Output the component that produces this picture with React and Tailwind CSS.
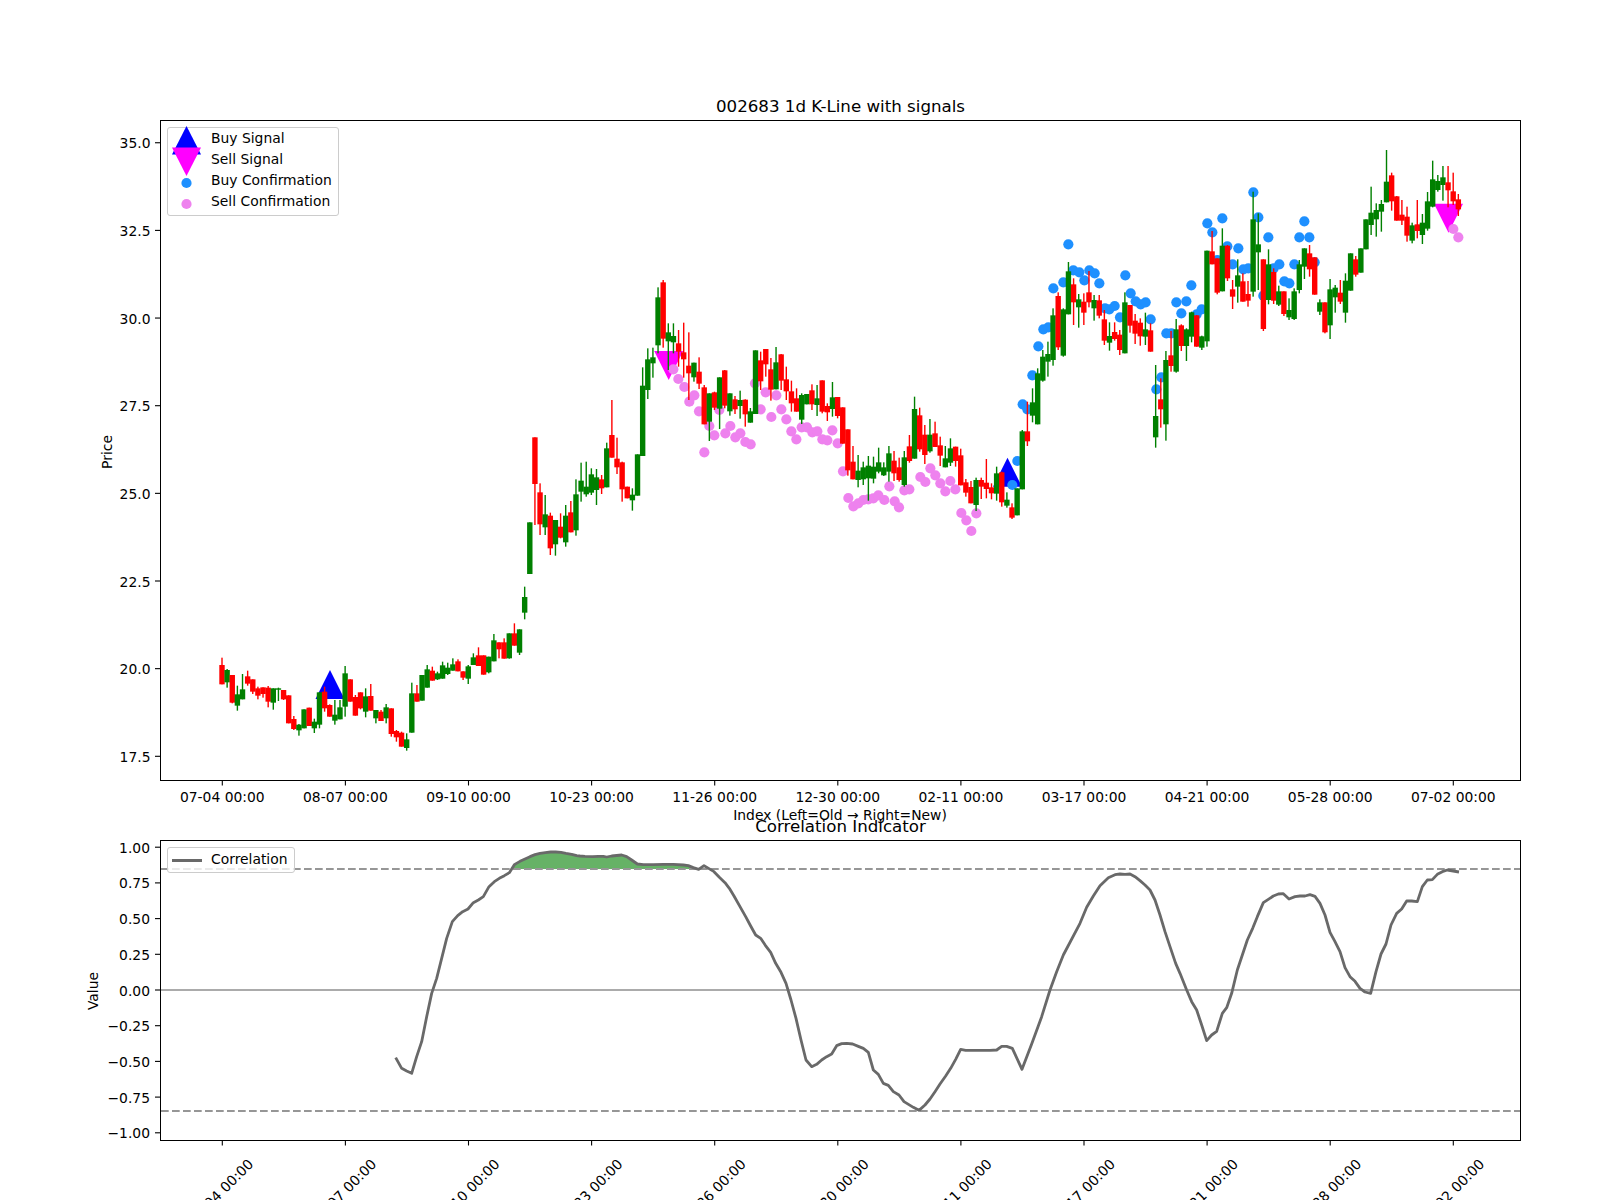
import React from "react";

/* Candle rows are [colour, wickTop, bodyTop, bodyBottom, wickBottom], read off
   3x crops of the chart, so every y is y / 3 + yOff in page pixels. */
const CANDLE_SEGMENTS = [
  {
    yOff: 620,
    rows: [
      ["r",113,135,193,193],["g",147,150,187,203],["r",165,165,248,250],["g",197,223,257,272],["g",162,208,238,238],
      ["r",152,169,191,197],["r",178,178,215,222],["r",200,205,227,238],["r",202,202,222,233],["r",198,203,245,262],
      ["g",205,205,248,269],["g",203,205,208,243],["r",210,210,238,240],["r",226,226,310,310],["r",288,297,327,330],
      ["g",312,314,331,347],["g",268,268,325,325],["r",263,263,318,318],["g",296,305,325,339],["g",217,217,314,325],
      ["r",200,215,265,275],["r",253,255,290,290],["g",240,284,302,314],["g",240,262,298,298],["g",138,160,260,290],
      ["r",178,178,245,245],["r",225,231,287,287],["r",217,217,265,268],["g",205,229,275,292],["r",192,228,272,272],
      ["g",270,270,295,310],["r",270,275,303,303],["g",252,262,295,310],["r",265,265,342,350],["r",330,333,352,365],
      ["r",335,338,380,380],["g",340,358,384,392],["g",188,220,338,338],["r",195,220,245,245],["g",165,165,242,242],
      ["g",135,148,203,203],["r",140,152,182,182],["g",155,160,178,180],["g",125,136,176,176],["g",128,143,162,165],
      ["g",115,133,152,152],["r",118,124,154,154],["r",154,154,173,180],["g",135,139,176,192],["g",100,112,135,135],
      ["r",82,106,138,138],["r",106,106,164,164],["g",110,110,157,160],["g",42,61,124,124],["r",67,67,88,115],
      ["r",55,67,116,116],["g",40,40,115,116],["r",10,40,77,77],["g",28,28,98,105],["g",-100,-69,-22,-2],
    ],
  },
  {
    yOff: 270,
    rows: [
      ["g",757,757,912,912],["r",502,502,642,765],["r",640,667,763,795],["g",675,733,772,795],["r",728,737,835,855],
      ["g",750,750,823,857],["r",730,770,803,805],["g",705,737,817,830],["r",693,727,787,787],["g",628,673,781,797],
      ["g",578,632,665,695],["g",575,650,673,680],["g",595,613,668,675],["g",597,622,660,705],["r",615,628,655,672],
      ["g",518,535,652,652],["r",390,495,563,563],["r",503,566,592,612],["r",575,577,658,695],["r",650,650,685,685],
      ["g",655,674,691,722],["g",553,553,677,677],["g",292,347,558,558],["g",235,268,360,387],["g",233,262,280,323],
      ["g",52,82,226,250],["r",30,37,206,233],["g",160,187,214,300],["g",160,198,217,250],["r",180,220,245,290],
      ["r",158,247,268,323],["r",187,287,310,390],["g",278,278,322,335],["r",262,305,341,357],["r",345,352,463,463],
      ["g",370,370,455,513],["r",365,367,413,420],["g",322,322,416,477],["r",300,301,407,415],["g",370,370,424,437],
      ["r",378,388,418,432],["g",362,390,408,446],["r",388,389,433,470],["g",414,424,458,458],["g",241,241,432,432],
      ["r",245,271,334,360],["r",237,237,283,320],["r",264,298,359,392],["g",231,277,358,358],["r",252,253,332,360],
      ["r",290,328,364,390],["r",332,364,400,425],["r",355,385,425,425],["g",370,375,449,462],["g",372,372,403,403],
      ["r",343,361,403,420],["g",345,385,405,438],["r",331,331,425,430],["r",400,408,427,453],["g",336,382,417,440],
      ["r",381,381,438,445],["r",412,412,521,521],["r",478,478,601,617],
    ],
  },
  {
    yOff: 350,
    rows: [
      ["r",288,335,388,388],["g",315,362,390,412],["g",335,352,388,405],["g",318,347,385,452],["g",320,350,386,400],
      ["g",293,337,365,370],["g",337,352,376,378],["g",288,310,365,395],["r",303,332,370,393],["r",323,352,390,395],
      ["g",303,322,405,410],["r",255,289,333,338],["g",140,177,326,326],["r",173,196,298,305],["r",225,254,315,342],
      ["g",207,254,304,308],["r",215,250,291,291],["r",260,286,317,348],["g",288,325,352,352],["g",265,295,338,348],
      ["r",290,290,333,350],["r",296,316,406,406],["r",387,397,428,440],["r",393,411,460,460],["g",383,390,465,483],
      ["r",383,390,410,447],["r",327,398,417,445],["r",400,412,430,448],["g",350,370,431,452],["r",365,367,457,470],
      ["g",427,449,467,473],["r",460,472,503,507],["g",415,415,496,496],["g",240,244,418,418],["r",155,244,274,288],
    ],
  },
  {
    yOff: 130,
    rows: [
      ["g",775,817,857,877],["g",715,730,883,883],["g",660,680,752,755],["g",635,672,695,740],["g",535,556,690,707],
      ["r",487,498,652,660],["g",535,538,677,680],["g",396,424,553,553],["r",445,463,517,585],["g",492,508,532,593],
      ["r",490,515,548,585],["r",423,487,517,532],["g",495,510,535,572],["r",495,511,557,565],["r",540,568,632,645],
      ["g",577,618,638,662],["r",577,606,627,632],["r",600,614,660,675],["g",487,517,670,670],["r",525,525,587,608],
      ["r",552,572,611,642],["r",565,578,619,647],["g",548,598,620,645],["r",580,601,665,665],["g",705,858,922,953],
      ["r",745,808,838,893],["g",663,690,883,932],["r",603,676,708,725],["g",567,598,725,728],["r",583,586,648,663],
      ["g",595,598,648,693],["g",545,547,620,637],["r",555,556,650,650],["g",617,619,653,660],["g",362,362,634,650],
      ["r",303,364,403,403],["r",385,385,488,493],["g",295,347,484,484],["r",345,347,445,453],["r",450,478,500,537],
      ["g",388,436,470,518],["r",430,454,515,515],["r",453,492,512,530],["g",185,268,485,500],["g",250,343,367,480],
      ["r",388,388,597,603],["g",358,403,510,523],["r",415,426,512,522],["g",467,484,524,528],["r",484,484,552,558],
      ["g",505,540,562,570],["g",475,484,567,570],["g",390,403,480,490],["g",355,355,410,447],["r",345,370,418,440],
      ["r",382,382,494,494],["g",508,517,545,555],["r",517,517,607,610],["g",447,478,586,627],["g",465,473,502,548],
      ["r",450,488,515,522],["g",430,452,548,578],["g",370,370,482,482],["r",378,388,434,440],["g",355,355,428,428],
      ["g",268,268,358,358],["g",170,248,285,315],["g",220,240,268,320],["g",210,222,245,305],["g",60,155,217,217],
      ["r",128,136,214,242],["r",198,199,272,272],["r",210,254,272,285],["r",230,260,317,335],["g",278,286,332,340],
      ["r",210,283,303,325],["g",252,278,315,342],["g",186,214,296,302],["g",92,148,230,232],["g",135,153,180,185],
      ["g",108,142,165,212],["r",108,157,181,232],["r",128,184,214,225],["r",192,208,238,258],
    ],
  },
];

const crop = (xOff, yOff, points) => points.map(([x, y]) => [x / 3 + xOff, y / 3 + yOff]);

const SELL_DOTS = [
  ...crop(500, 270, [[520,298],[535,327],[553,351],[568,395],[583,376],[597,424],[613,547],[628,468],[643,496],[658,420],[676,490],[691,468],[706,502],[721,490],[736,516],[752,523],[765,340],[782,418],[797,367],[814,441],[829,376],[844,418],[859,448],[874,484],[889,508],[905,472],[921,472],[937,487],[952,484],[967,508],[982,511],[997,481],[1013,520],[1029,604],[1045,684],[1060,709],[1075,700],[1090,690],[1105,688],[1120,685],[1135,676],[1153,690],[1168,649],[1184,694],[1197,712]]),
  ...crop(850, 350, [[163,421],[178,418],[211,381],[226,396],[241,355],[256,376],[271,400],[286,424],[301,393],[316,418],[334,489],[349,511],[364,543],[379,490]]),
  ...crop(1020, 130, [[1300,297],[1315,322]]),
];

const BUY_DOTS = [
  ...crop(850, 350, [[487,405],[502,333]]),
  ...crop(1020, 130, [[8,823],[22,838],[37,736],[55,649],[70,598],[85,592],[100,475],[130,457],[145,343],[160,421],[178,427],[193,451],[208,421],[224,430],[238,460],[255,535],[268,538],[284,528],[300,562],[316,436],[332,490],[347,514],[362,523],[377,517],[392,568],[409,778],[424,742],[439,610],[454,610],[469,517],[484,550],[499,514],[514,466],[530,553],[545,538],[562,280],[577,307],[592,390],[607,265],[622,349],[638,403],[655,355],[670,418],[685,415],[700,187],[715,262],[730,497],[745,322],[761,415],[778,403],[793,454],[808,460],[823,403],[838,322],[853,274],[868,322],[884,397]]),
];

const CORRELATION = [
  ...crop(80, 790, [[947,803],[965,835],[980,843],[995,850],[1010,800],[1025,755],[1040,680],[1055,610],[1070,565],[1085,505],[1100,445],[1117,395],[1133,377],[1148,365],[1164,357],[1180,338],[1195,330],[1210,320],[1227,290],[1243,275],[1258,265],[1273,257],[1288,248],[1303,224],[1320,214],[1335,207],[1350,200],[1365,194],[1380,190],[1396,188],[1412,186],[1427,186],[1443,187],[1458,190],[1475,193],[1490,197]]),
  ...crop(580, 790, [[0,198],[15,199],[38,200],[55,199],[70,199],[80,201],[95,198],[125,195],[140,200],[155,210],[172,222],[190,224],[220,224],[250,223],[280,223],[310,225],[325,227],[340,233],[356,238],[372,227],[387,236],[402,245],[418,262],[435,278],[448,295],[462,318],[480,350],[497,380],[512,408],[527,435],[542,445],[556,466],[572,487],[587,520],[603,547],[618,580],[633,630],[648,685],[663,750],[678,810],[695,830],[710,823],[725,810],[740,800],[755,792],[770,767],[785,761],[800,760],[818,762],[835,769],[850,775],[865,787],[880,840],[895,853],[910,880],[925,886],[940,905],[957,915],[972,935],[1000,952],[1017,961],[1035,945],[1050,927],[1065,905],[1080,882],[1097,858],[1112,835],[1127,808],[1142,778],[1157,781],[1190,781],[1230,781],[1250,780],[1265,769],[1280,769],[1297,775],[1326,838],[1355,762],[1385,680],[1410,600],[1430,545],[1450,495]]),
  ...crop(1080, 790, [[0,400],[20,352],[40,318],[60,287],[85,263],[105,254],[120,252],[135,253],[150,252],[165,260],[180,272],[195,285],[210,300],[225,330],[240,375],[255,425],[270,470],[287,520],[300,550],[320,600],[335,635],[350,660],[365,705],[380,752],[395,735],[410,724],[427,670],[440,653],[455,610],[472,540],[487,495],[502,450],[518,415],[532,380],[550,338],[565,328],[580,318],[595,312],[610,311],[627,327],[645,320],[660,318],[675,318],[690,314],[705,319],[720,340],[735,375],[750,427],[765,455],[780,485],[795,533],[810,560],[825,574],[840,595],[855,606],[872,610],[888,545],[903,492],[918,462],[933,405],[950,370],[965,357],[980,333],[995,333],[1012,335],[1027,290],[1042,270],[1057,269],[1072,253],[1087,245],[1102,240],[1137,246]]),
];

const CANDLE_COLOR = { r: "#ff0000", g: "#008000" };
const DATE_TICKS = ["07-04 00:00", "08-07 00:00", "09-10 00:00", "10-23 00:00", "11-26 00:00", "12-30 00:00", "02-11 00:00", "03-17 00:00", "04-21 00:00", "05-28 00:00", "07-02 00:00"];
const PRICE_TICKS = ["35.0", "32.5", "30.0", "27.5", "25.0", "22.5", "20.0", "17.5"];
const VALUE_TICKS = ["1.00", "0.75", "0.50", "0.25", "0.00", "−0.25", "−0.50", "−0.75", "−1.00"];

const candleX = (i) => 222 + 5.13 * i;
const tickX = (i) => 222.3 + 123.1 * i;
const priceY = (p) => 756.3 - (p - 17.5) * 35.06;
const valueY = (v) => 990 - v * 142.8;
const pts = (list) => list.map(([x, y]) => `${x},${y}`).join(" ");

const Triangle = ({ x, y, up, color }) => (
  <polygon
    points={up ? `${x},${y} ${x - 14.5},${y + 29} ${x + 14.5},${y + 29}` : `${x},${y} ${x - 14.5},${y - 29} ${x + 14.5},${y - 29}`}
    fill={color}
  />
);

const Candles = () => {
  let index = 0;
  return CANDLE_SEGMENTS.flatMap(({ yOff, rows }) =>
    rows.map(([c, wickTop, bodyTop, bodyBottom, wickBottom]) => {
      const x = candleX(index++);
      return (
        <g key={index} fill={CANDLE_COLOR[c]}>
          <rect x={x - 0.7} y={wickTop / 3 + yOff} width="1.4" height={(wickBottom - wickTop) / 3} />
          <rect x={x - 2.7} y={bodyTop / 3 + yOff} width="5.4" height={Math.max((bodyBottom - bodyTop) / 3, 1.4)} />
        </g>
      );
    })
  );
};

const PriceChart = () => (
  <svg viewBox="160 120 1361 661" className="absolute -left-px -top-px w-[1361px] h-[661px] overflow-visible text-[13.89px]">
    <Triangle x={330} y={670} up color="#0000ff" />
    <Triangle x={1007.5} y={457.7} up color="#0000ff" />
    <Triangle x={668.7} y={380} color="#ff00ff" />
    <Triangle x={1448.5} y={232.7} color="#ff00ff" />
    {SELL_DOTS.map(([x, y], i) => <circle key={i} cx={x} cy={y} r="5.1" fill="#ee82ee" />)}
    {BUY_DOTS.map(([x, y], i) => <circle key={i} cx={x} cy={y} r="5.1" fill="#1e90ff" />)}
    <Candles />
    {PRICE_TICKS.map((t) => (
      <g key={t}>
        <line x1="155" x2="160" y1={priceY(+t)} y2={priceY(+t)} stroke="#000" strokeWidth="1.1" />
        <text x="150.5" y={priceY(+t) + 5.5} textAnchor="end">{t}</text>
      </g>
    ))}
    {DATE_TICKS.map((t, i) => (
      <g key={t}>
        <line x1={tickX(i)} x2={tickX(i)} y1="781" y2="785.5" stroke="#000" strokeWidth="1.1" />
        <text x={tickX(i)} y="801.5" textAnchor="middle">{t}</text>
      </g>
    ))}
    <text x="840" y="820" textAnchor="middle">Index (Left=Old → Right=New)</text>
    <text transform="translate(112 452) rotate(-90)" textAnchor="middle">Price</text>
  </svg>
);

const CorrelationChart = () => {
  const above = CORRELATION.filter(([x, y]) => x > 511 && x < 699 && y < 869);
  return (
    <svg viewBox="160 840 1361 301" className="absolute -left-px -top-px w-[1361px] h-[301px] overflow-visible text-[13.89px]">
      <polygon points={pts([[511, 869], ...above, [699, 869]])} fill="#66b266" />
      <line x1="161" x2="1520" y1="990" y2="990" stroke="#ababab" strokeWidth="2" />
      <line x1="161" x2="1520" y1="869" y2="869" stroke="#969696" strokeWidth="2" strokeDasharray="7.7 3.3" />
      <line x1="161" x2="1520" y1="1111" y2="1111" stroke="#969696" strokeWidth="2" strokeDasharray="7.7 3.3" />
      <polyline points={pts(CORRELATION)} fill="none" stroke="#696969" strokeWidth="2.8" strokeLinejoin="round" />
      {VALUE_TICKS.map((t, i) => (
        <g key={t}>
          <line x1="155" x2="160" y1={valueY(1 - i * 0.25)} y2={valueY(1 - i * 0.25)} stroke="#000" strokeWidth="1.1" />
          <text x="150" y={valueY(1 - i * 0.25) + 5.5} textAnchor="end">{t}</text>
        </g>
      ))}
      {DATE_TICKS.map((t, i) => (
        <g key={t}>
          <line x1={tickX(i)} x2={tickX(i)} y1="1141" y2="1145.5" stroke="#000" strokeWidth="1.1" />
          <text transform={`translate(${tickX(i) + 2} 1195) rotate(-45)`} textAnchor="middle">{t}</text>
        </g>
      ))}
      <text transform="translate(98 991) rotate(-90)" textAnchor="middle">Value</text>
    </svg>
  );
};

const LegendRow = ({ label, children }) => (
  <div className="flex h-[21px] items-center gap-[10px]">
    <svg viewBox="0 0 29 21" className="h-[21px] w-[29px] shrink-0 overflow-visible">{children}</svg>
    <span>{label}</span>
  </div>
);

const PriceLegend = () => (
  <div className="absolute left-[6px] top-[6px] flex w-[172px] h-[89px] flex-col rounded-[3px] border border-[#cccccc] bg-white/80 pl-[4px] text-[13.89px] leading-none">
    <LegendRow label="Buy Signal"><polygon points="14.5,-2 0,26.5 29,26.5" fill="#0000ff" /></LegendRow>
    <LegendRow label="Sell Signal"><polygon points="14.5,27 0,-1.5 29,-1.5" fill="#ff00ff" /></LegendRow>
    <LegendRow label="Buy Confirmation"><circle cx="14.5" cy="13" r="5.1" fill="#1e90ff" /></LegendRow>
    <LegendRow label="Sell Confirmation"><circle cx="14.5" cy="13" r="5.1" fill="#ee82ee" /></LegendRow>
  </div>
);

const CorrelationLegend = () => (
  <div className="absolute left-[6px] top-[6px] flex h-[26px] w-[128px] items-center gap-[9px] rounded-[3px] border border-[#cccccc] bg-white/80 pl-[4px] text-[13.89px] leading-none">
    <span className="h-[3px] w-[30px] bg-[#696969]" />
    <span>Correlation</span>
  </div>
);

export default function App() {
  return (
    <div className="flex h-[1200px] w-[1600px] flex-col overflow-hidden bg-white pl-[160px] font-['DejaVu_Sans',sans-serif] text-black">
      <h2 className="flex h-[120px] w-[1361px] shrink-0 items-end justify-center pb-[4px] text-[16.67px] font-normal leading-none">
        002683 1d K-Line with signals
      </h2>
      <div className="relative h-[661px] w-[1361px] shrink-0 border border-black">
        <PriceChart />
        <PriceLegend />
      </div>
      <h2 className="flex h-[59px] w-[1361px] shrink-0 items-end justify-center pb-[4px] text-[16.67px] font-normal leading-none">
        Correlation Indicator
      </h2>
      <div className="relative h-[301px] w-[1361px] shrink-0 border border-black">
        <CorrelationChart />
        <CorrelationLegend />
      </div>
    </div>
  );
}
